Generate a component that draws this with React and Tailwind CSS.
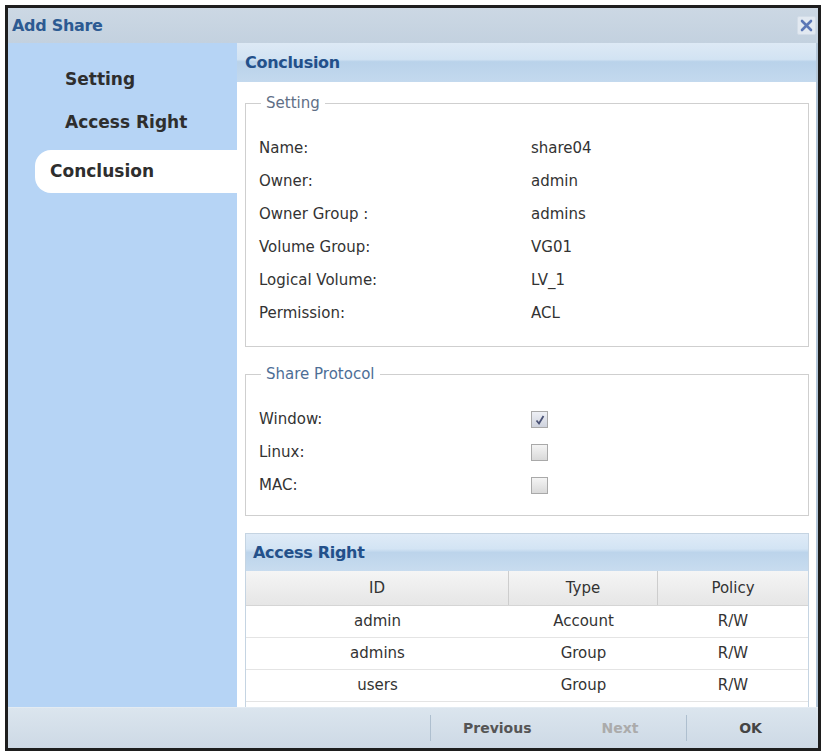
import React from "react";

const font = { fontFamily: '"DejaVu Sans", "Liberation Sans", sans-serif' };

function Checkbox({ checked }) {
  return (
    <div
      className={
        "w-[17px] h-[17px] border border-[#a9a9a9] flex items-center justify-center " +
        (checked
          ? "bg-[linear-gradient(to_bottom,#eef0f5,#cfd3de)]"
          : "bg-[linear-gradient(to_bottom,#f4f4f4,#d9d9d9)]")
      }
    >
      {checked && (
        <svg width="12" height="12" viewBox="0 0 12 12">
          <path d="M2.5 6.5 L5 9.5 L9.5 2" fill="none" stroke="#4a5276" strokeWidth="1.8" />
        </svg>
      )}
    </div>
  );
}

function Row({ label, value, children }) {
  return (
    <div className="flex items-center h-[33px]">
      <div className="w-[272px] text-[15px] text-[#333]">{label}</div>
      {value !== undefined ? <div className="text-[15px] text-[#333]">{value}</div> : children}
    </div>
  );
}

export default function App() {
  const settings = [
    ["Name:", "share04"],
    ["Owner:", "admin"],
    ["Owner Group :", "admins"],
    ["Volume Group:", "VG01"],
    ["Logical Volume:", "LV_1"],
    ["Permission:", "ACL"],
  ];
  const rights = [
    ["admin", "Account", "R/W"],
    ["admins", "Group", "R/W"],
    ["users", "Group", "R/W"],
    ["", "", ""],
  ];
  return (
    <div className="w-[826px] h-[753px] bg-white pt-[5px] pl-[5px]" style={font}>
      <div className="w-[816px] h-[746px] border-[3px] border-[#1e1e1e] flex flex-col overflow-hidden bg-[#c8d5e2]">
        {/* Title bar */}
        <div className="h-[35px] shrink-0 flex items-center justify-between pl-[4px] pr-[2px] bg-[linear-gradient(to_bottom,#ccd8e4,#c3d1df)]">
          <span className="text-[16px] font-bold text-[#2c5a92] tracking-[-0.3px]">Add Share</span>
          <div className="w-[19px] h-[19px] rounded-[2px] bg-[#e2e9f1] border border-[#d3dde8] flex items-center justify-center">
            <svg width="13" height="13" viewBox="0 0 13 13">
              <path d="M2 2 L11 11 M11 2 L2 11" stroke="#5b77b6" strokeWidth="2.6" strokeLinecap="round" />
            </svg>
          </div>
        </div>

        {/* Body */}
        <div className="flex flex-1 min-h-0">
          {/* Sidebar */}
          <div className="w-[229px] shrink-0 bg-[#b6d4f5] pt-[15px] flex flex-col">
            <div className="h-[43px] flex items-center pl-[57px] text-[17px] font-bold text-[#2e2e2e]">Setting</div>
            <div className="h-[43px] flex items-center pl-[57px] text-[17px] font-bold text-[#2e2e2e]">Access Right</div>
            <div className="mt-[6px] ml-[27px] h-[43px] flex items-center pl-[15px] bg-white rounded-l-[16px] text-[17px] font-bold text-[#2e2e2e]">
              Conclusion
            </div>
          </div>

          {/* Main */}
          <div className="flex-1 min-w-0 flex flex-col bg-white border-r-[2px] border-[#b3c6d8] overflow-hidden">
            <div className="h-[39px] shrink-0 flex items-center pl-[8px] bg-[linear-gradient(to_bottom,#dde9f5_0%,#d2e3f3_42%,#b9d2ea_48%,#c3d9ee_100%)]">
              <span className="text-[16px] font-bold text-[#23508a] tracking-[-0.3px]">Conclusion</span>
            </div>
            <div className="flex-1 min-h-0 pl-[8px] pr-[7px] pt-[12px] flex flex-col">
              <fieldset className="border border-[#cfcfcf] px-[13px] pt-[20px] pb-[16px]">
                <legend className="ml-[2px] px-[5px] text-[15px] text-[#5f6f86] leading-[18px]">Setting</legend>
                {settings.map(([l, v]) => (
                  <Row key={l} label={l} value={v} />
                ))}
              </fieldset>

              <fieldset className="mt-[18px] border border-[#cfcfcf] px-[13px] pt-[20px] pb-[13px]">
                <legend className="ml-[2px] px-[5px] text-[15px] text-[#4d6e96] leading-[18px]">Share Protocol</legend>
                <Row label="Window:">
                  <Checkbox checked />
                </Row>
                <Row label="Linux:">
                  <Checkbox />
                </Row>
                <Row label="MAC:">
                  <Checkbox />
                </Row>
              </fieldset>

              <div className="mt-[17px] border border-[#c5d4e2] flex flex-col">
                <div className="h-[37px] flex items-center pl-[7px] bg-[linear-gradient(to_bottom,#dfebf7_0%,#d3e4f4_40%,#bcd4eb_50%,#c8dcef_100%)]">
                  <span className="text-[16px] font-bold text-[#23508a] tracking-[-0.3px]">Access Right</span>
                </div>
                <div className="grid grid-cols-[263px_149px_1fr] h-[35px] bg-[linear-gradient(to_bottom,#f5f5f5,#e6e6e6)] border-b border-[#d5d5d5] text-[15px] text-[#333]">
                  <div className="flex items-center justify-center border-r border-[#cdcdcd]">ID</div>
                  <div className="flex items-center justify-center border-r border-[#cdcdcd]">Type</div>
                  <div className="flex items-center justify-center">Policy</div>
                </div>
                {rights.map((r, i) => (
                  <div key={i} className="grid grid-cols-[263px_149px_1fr] h-[32px] border-b border-[#e4e4e4] text-[15px] text-[#333]">
                    <div className="flex items-center justify-center">{r[0]}</div>
                    <div className="flex items-center justify-center">{r[1]}</div>
                    <div className="flex items-center justify-center">{r[2]}</div>
                  </div>
                ))}
              </div>
            </div>
          </div>
        </div>

        {/* Footer */}
        <div className="h-[41px] shrink-0 border-t border-[#e3ebf2] bg-[linear-gradient(to_bottom,#dbe5ee,#cdd9e5)] flex items-center text-[14px] font-bold">
          <div className="w-[422px] h-full" />
          <div className="w-px h-[26px] bg-[#aebfcf]" />
          <div className="w-[255px] flex items-center">
            <span className="ml-[32px] text-[#555]">Previous</span>
            <span className="ml-[70px] text-[#ababab]">Next</span>
          </div>
          <div className="w-px h-[26px] bg-[#aebfcf]" />
          <div className="flex-1 flex justify-center text-[#444] pr-[4px]">OK</div>
        </div>
      </div>
    </div>
  );
}
